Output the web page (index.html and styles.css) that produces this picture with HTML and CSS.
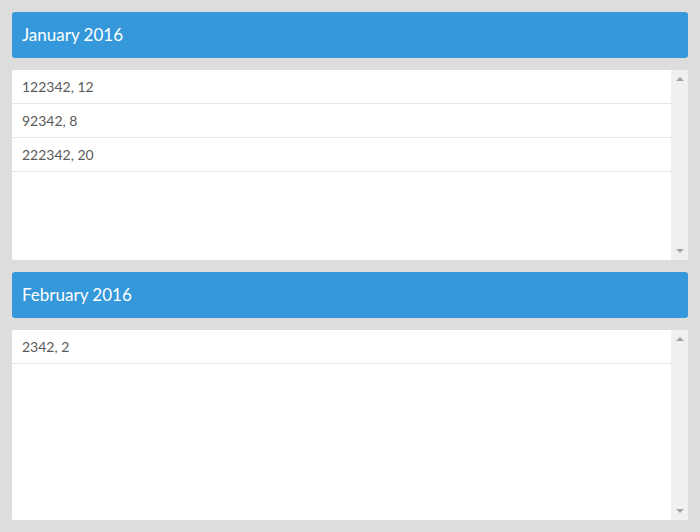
FILE: index.html
```html
<!DOCTYPE html>
<html>
<head>
<meta charset="utf-8">
<link rel="stylesheet" href="styles.css">
</head>
<body>
<div class="page">
  <section class="group">
    <div class="header">January 2016</div>
    <div class="listbox">
      <div class="rows">
        <div class="row">122342, 12</div>
        <div class="row">92342, 8</div>
        <div class="row">222342, 20</div>
      </div>
      <div class="scrollbar">
        <span class="arrow up"></span>
        <span class="arrow down"></span>
      </div>
    </div>
  </section>
  <section class="group">
    <div class="header">February 2016</div>
    <div class="listbox">
      <div class="rows">
        <div class="row">2342, 2</div>
      </div>
      <div class="scrollbar">
        <span class="arrow up"></span>
        <span class="arrow down"></span>
      </div>
    </div>
  </section>
</div>
</body>
</html>
```
FILE: styles.css
```css
html, body {
  margin: 0;
  padding: 0;
  background: #dddddd;
}
body {
  font-family: Lato, "Open Sans", sans-serif;
}
.page {
  padding: 12px;
  display: flex;
  flex-direction: column;
  gap: 12px;
}
.group {
  display: flex;
  flex-direction: column;
  gap: 12px;
}
.header {
  height: 46px;
  box-sizing: border-box;
  background: #3498db;
  color: #ffffff;
  border-radius: 3px;
  font-size: 17px;
  line-height: 46px;
  padding-left: 10px;
}
.listbox {
  height: 190px;
  background: #ffffff;
  border-radius: 2px;
  display: flex;
  overflow: hidden;
}
.rows {
  flex: 1;
  display: flex;
  flex-direction: column;
}
.row {
  height: 34px;
  box-sizing: border-box;
  border-bottom: 1px solid #e6e6e6;
  padding-left: 10px;
  font-size: 14px;
  line-height: 33px;
  color: #5a5a5a;
}
.scrollbar {
  width: 17px;
  background: #f0f0f0;
  display: flex;
  flex-direction: column;
  justify-content: space-between;
  align-items: center;
  padding: 7px 0 7px;
}
.arrow {
  width: 0;
  height: 0;
  border-left: 4px solid transparent;
  border-right: 4px solid transparent;
}
.arrow.up {
  border-bottom: 4px solid #a3a3a3;
}
.arrow.down {
  border-top: 4px solid #a3a3a3;
}
```
